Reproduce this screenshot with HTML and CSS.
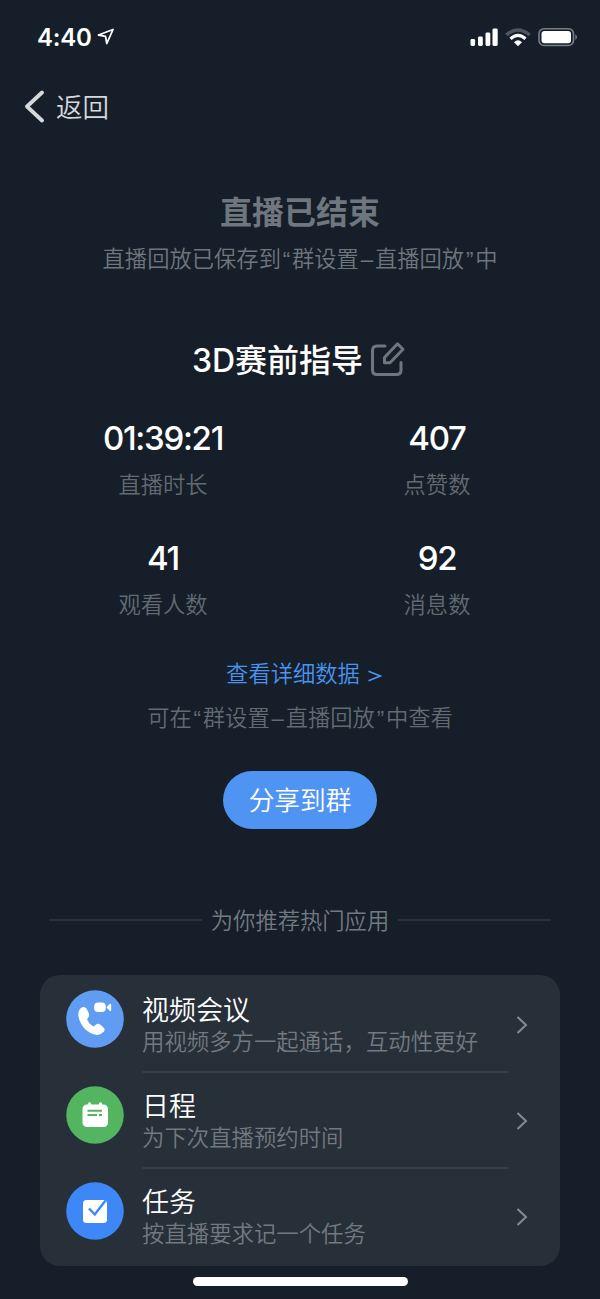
FILE: index.html
```html
<!DOCTYPE html>
<html lang="zh-CN">
<head>
<meta charset="utf-8">
<title>直播已结束</title>
<link rel="stylesheet" href="styles.css">
</head>
<body>
<main class="screen">
  <header class="status">
    <span class="clock">4:40</span>
    <svg class="loc" width="18" height="18" viewBox="0 0 18 18"><path d="M1.500 7 16 1.500 9.800 15.500 8.500 8.300Z" fill="none" stroke="#fff" stroke-width="1.800" stroke-linejoin="round"/></svg>
    <svg class="signals" width="110" height="22" viewBox="0 0 110 22">
      <g fill="#fff"><rect x="0.500" y="12" width="4.600" height="7" rx="1.400"/><rect x="8" y="9.500" width="4.800" height="9.500" rx="1.400"/><rect x="15.500" y="5.500" width="4.800" height="13.500" rx="1.400"/><rect x="22.500" y="1.500" width="5.200" height="17.500" rx="1.400"/></g>
      <path d="M36.300 8Q48 -2 59.700 8" fill="none" stroke="#4d5660" stroke-width="3.600"/>
      <path d="M40.500 11.800Q48 5 55.500 11.800" fill="none" stroke="#fff" stroke-width="3.200"/>
      <path d="M44 15.200Q48 11.500 52 15.200L48 19.200Z" fill="#fff"/>
      <rect x="69" y="1.700" width="34.500" height="16.800" rx="5" fill="none" stroke="#777e85" stroke-width="1.600"/>
      <rect x="71.500" y="4" width="29.500" height="12.200" rx="3" fill="#fff"/>
      <path d="M105.300 7.200Q109 10 105.300 13Z" fill="#777e85"/>
    </svg>
  </header>
  <nav class="back">
    <svg width="20" height="34" viewBox="0 0 20 34"><path d="M17 3.500 2 17.500 17 31.500" fill="none" stroke="#d6d8da" stroke-width="3.800" stroke-linecap="round" stroke-linejoin="round"/></svg>
    <span>返回</span>
  </nav>
  <h1 class="ended">直播已结束</h1>
  <p class="saved">直播回放已保存到<span class="mark">“</span>群设置<span class="mark">–</span>直播回放<span class="mark">”</span>中</p>
  <div class="name">
    <h2>3D赛前指导</h2>
    <svg width="36" height="36" viewBox="0 0 36 36" fill="none" stroke="#70767d" stroke-width="3" stroke-linecap="round" stroke-linejoin="round"><path d="M15 5H7Q2.500 5 2.500 9.500V29Q2.500 33.500 7 33.500H26.500Q31 33.500 31 29V21.500"/><path d="M14.500 16.500 27.500 2.800 33 8.300 20 21.800H14.500Z"/></svg>
  </div>
  <section class="stats">
    <div class="stat"><strong>01:39:21</strong><span>直播时长</span></div>
    <div class="stat"><strong>407</strong><span>点赞数</span></div>
    <div class="stat"><strong>41</strong><span>观看人数</span></div>
    <div class="stat"><strong>92</strong><span>消息数</span></div>
  </section>
  <a class="detail"><span>查看详细数据</span><svg width="14" height="14" viewBox="0 0 14 14"><path d="M.5 2.300 12.300 7 .5 11.700" fill="none" stroke="#4b92f1" stroke-width="1.700"/></svg></a>
  <p class="hint">可在<span class="mark">“</span>群设置<span class="mark">–</span>直播回放<span class="mark">”</span>中查看</p>
  <button class="share">分享到群</button>
  <div class="divider"><span>为你推荐热门应用</span></div>
  <section class="card">
    <div class="app">
      <svg class="icon" width="58" height="58" viewBox="0 0 58 58"><circle cx="29" cy="29" r="28.800" fill="#609df2"/><path d="M17 17Q11.500 19 12.500 26.500C14.500 36.500 22 44 31 45Q34 45 38 41.500Q39.500 39.500 37.500 37.500L33.500 34Q31.500 33 29.500 35L27.500 36.500Q23 34 21 29.500L22.500 27Q23.500 25.500 22.500 22.500L20.500 18.500Q19 16.500 17 17Z" fill="#fff"/><rect x="28.200" y="12.500" width="11.500" height="9.500" rx="3.800" fill="#fff"/><path d="M40.500 17.300 43.500 14Q45.200 13 45.200 15V20Q45.200 21.800 43.500 20.800Z" fill="#fff"/></svg>
      <div class="text"><h3>视频会议</h3><p>用视频多方一起通话，互动性更好</p></div>
      <svg class="chev" width="12" height="20" viewBox="0 0 12 20"><path d="M1.500 2 10 10 1.500 18"/></svg>
    </div>
    <div class="app">
      <svg class="icon" width="58" height="58" viewBox="0 0 58 58"><circle cx="29" cy="29" r="28.800" fill="#53b55f"/><rect x="16.500" y="18.500" width="25.500" height="22.500" rx="4.500" fill="#fff"/><path d="M23.500 18V21M34.500 18V21" stroke="#fff" stroke-width="3.400" stroke-linecap="round"/><path d="M21.500 24.700H36M21.500 29H31M32.800 29H36" stroke="#53b55f" stroke-width="2"/></svg>
      <div class="text"><h3>日程</h3><p>为下次直播预约时间</p></div>
      <svg class="chev" width="12" height="20" viewBox="0 0 12 20"><path d="M1.500 2 10 10 1.500 18"/></svg>
    </div>
    <div class="app">
      <svg class="icon" width="58" height="58" viewBox="0 0 58 58"><circle cx="29" cy="29" r="28.800" fill="#3e87f7"/><rect x="17" y="18" width="24" height="23" rx="3.500" fill="#fff"/><path d="M23 26.500 28.800 32.500 39.500 18.500" fill="none" stroke="#3e87f7" stroke-width="2.400"/></svg>
      <div class="text"><h3>任务</h3><p>按直播要求记一个任务</p></div>
      <svg class="chev" width="12" height="20" viewBox="0 0 12 20"><path d="M1.500 2 10 10 1.500 18"/></svg>
    </div>
  </section>
  <div class="home"></div>
</main>
</body>
</html>
```

FILE: styles.css
```css
* { box-sizing: border-box; margin: 0; padding: 0; }
body { background: #151e29; }
.screen {
  width: 600px; height: 1299px; overflow: hidden;
  display: flex; flex-direction: column; align-items: center;
  background: #151e29; color: #fff;
  font-family: "Liberation Sans", "Noto Sans CJK SC", sans-serif;
  font-weight: 350; white-space: nowrap;
}
.status { width: 100%; height: 74px; padding: 2px 20px 0 37px; display: flex; align-items: center; flex: none; }
.clock { font: 600 24px/30px Inter, sans-serif; letter-spacing: -0.2px; }
.loc { margin: 0 0 2px 5px; }
.signals { margin-left: auto; }
.back { width: 100%; height: 64px; padding-left: 25px; display: flex; align-items: center; gap: 11px; color: #d6d8da; font-size: 26.500px; line-height: 40px; }
.back span { padding-top: 3px; }
.ended { margin-top: 51px; height: 48px; font-size: 32px; line-height: 48px; font-weight: 700; color: #70767d; }
.saved { margin-top: 6px; height: 34px; font-size: 22.300px; line-height: 34px; color: #70767d; }
.mark { padding: 0 1.800px; }
.name { margin-top: 58px; height: 48px; display: flex; align-items: center; gap: 7px; padding-right: 2px; }
.name h2 { padding-top: 3px; font: 500 32px/48px Inter, "Noto Sans CJK SC", sans-serif; }
.stats { width: 548px; margin-top: 35px; display: grid; grid-template-columns: 1fr 1fr; grid-auto-rows: 120px; }
.stat { display: flex; flex-direction: column; align-items: center; }
.stat strong { font: 500 33px/40px Inter, sans-serif; letter-spacing: -1.300px; }
.stat span { margin-top: 11px; font-size: 22.300px; line-height: 34px; color: #636a72; }
.detail { display: flex; align-items: center; gap: 8px; margin: -1px 0 0 8px; height: 34px; font-size: 22.300px; line-height: 34px; color: #4b92f1; }
.detail span { padding-top: 2px; }
.detail svg { margin-top: 4px; }
.hint { margin-top: 11px; height: 34px; font-size: 22.300px; line-height: 34px; color: #636a72; }
.share { margin-top: 35px; width: 154px; height: 58px; flex: none; border: 0; border-radius: 29px; background: #5094f3; color: #fff; font: 350 25.700px/54px "Noto Sans CJK SC", sans-serif; padding-bottom: 3px; }
.divider { width: 502px; margin-top: 74px; height: 34px; display: flex; align-items: center; gap: 9px; font-size: 22.300px; line-height: 34px; color: #737980; }
.divider span { padding-top: 3px; }
.divider::before, .divider::after { content: ""; flex: 1; height: 2px; background: #2a333d; }
.card { width: 520px; height: 291px; margin-top: 38px; padding: 2px 26px 0; border-radius: 20px; background: #272f39; flex: none; }
.app { display: flex; height: 96px; }
.icon { margin-top: 13px; flex: none; }
.text { width: 366px; margin-left: 18px; padding-top: 16px; }
.app:not(:last-child) .text { border-bottom: 2px solid #353e47; }
.text h3 { font-size: 27px; line-height: 36px; font-weight: 350; }
.text p { font-size: 22.400px; line-height: 28px; color: #737980; }
.chev { margin: 38px 0 0 8px; fill: none; stroke: #858b92; stroke-width: 2; }
.home { width: 215px; height: 9px; margin-top: 11px; border-radius: 5px; background: #fff; flex: none; }
```
